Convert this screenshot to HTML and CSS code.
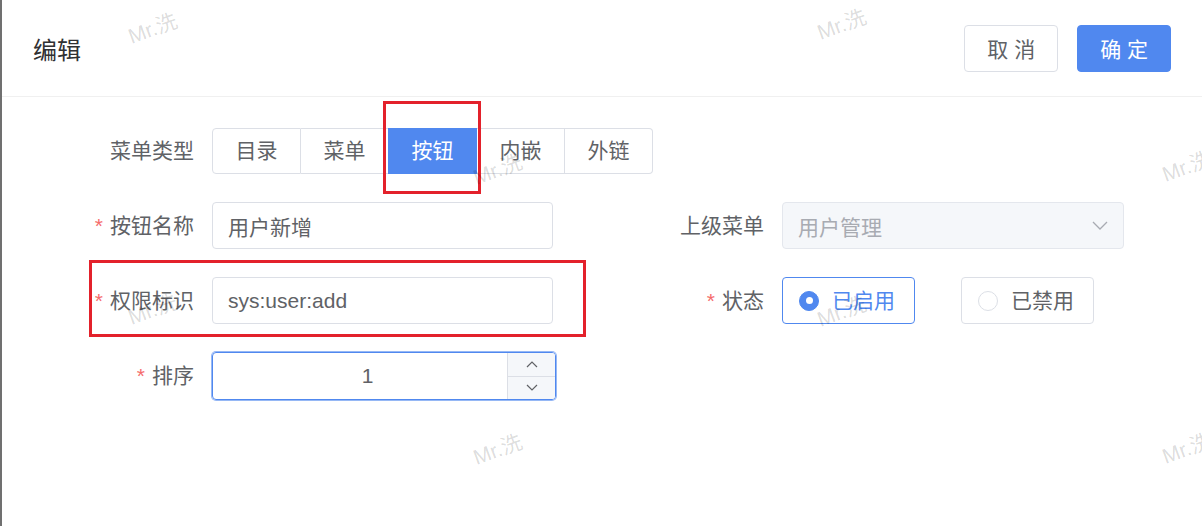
FILE: index.html
```html
<!DOCTYPE html>
<html lang="zh-CN">
<head>
  <meta charset="UTF-8">
  <title>编辑</title>
  <link rel="stylesheet" href="styles.css">
</head>
<body>
  <div class="page">
    <div class="dialog-header">
      <span class="dialog-title">编辑</span>
      <div class="dialog-actions">
        <button class="btn">取 消</button>
        <button class="btn btn-primary">确 定</button>
      </div>
    </div>

    <form class="form">
      <div class="form-item full">
        <label class="form-label">菜单类型</label>
        <div class="seg">
          <span class="seg-btn">目录</span>
          <span class="seg-btn">菜单</span>
          <span class="seg-btn active">按钮</span>
          <span class="seg-btn">内嵌</span>
          <span class="seg-btn">外链</span>
        </div>
      </div>

      <div class="form-item">
        <label class="form-label required">按钮名称</label>
        <input class="input" type="text" value="用户新增">
      </div>
      <div class="form-item">
        <label class="form-label">上级菜单</label>
        <div class="select">
          <span>用户管理</span>
          <svg width="16" height="9" viewBox="0 0 16 9"><polyline points="1,1 8,8 15,1" fill="none" stroke="#a8abb2" stroke-width="1.3"/></svg>
        </div>
      </div>

      <div class="form-item">
        <label class="form-label required">权限标识</label>
        <input class="input" type="text" value="sys:user:add">
      </div>
      <div class="form-item">
        <label class="form-label required">状态</label>
        <span class="radio checked"><span class="radio-dot"></span>已启用</span>
        <span class="radio"><span class="radio-dot"></span>已禁用</span>
      </div>

      <div class="form-item">
        <label class="form-label required">排序</label>
        <div class="number">
          <span class="number-value">1</span>
          <div class="number-ctrl">
            <span class="number-step">
              <svg width="12" height="7" viewBox="0 0 12 7"><polyline points="1,6 6,1 11,6" fill="none" stroke="#606266" stroke-width="1.2"/></svg>
            </span>
            <span class="number-step">
              <svg width="12" height="7" viewBox="0 0 12 7"><polyline points="1,1 6,6 11,1" fill="none" stroke="#606266" stroke-width="1.2"/></svg>
            </span>
          </div>
        </div>
      </div>
    </form>

    <div class="marks">
      <span class="mark mark-type"></span>
      <span class="mark mark-perm"></span>
    </div>

    <div class="watermarks">
      <span class="wm wm-1">Mr.洗</span>
      <span class="wm wm-2">Mr.洗</span>
      <span class="wm wm-3">Mr.洗</span>
      <span class="wm wm-4">Mr.洗</span>
      <span class="wm wm-5">Mr.洗</span>
      <span class="wm wm-6">Mr.洗</span>
      <span class="wm wm-7">Mr.洗</span>
      <span class="wm wm-8">Mr.洗</span>
    </div>
  </div>
</body>
</html>
```

FILE: styles.css
```css
* {
  box-sizing: border-box;
}

body {
  margin: 0;
  font-family: "Liberation Sans", "Noto Sans CJK SC", sans-serif;
  background-color: #fff;
  color: #606266;
}

.page {
  position: relative;
  width: 1202px;
  height: 526px;
  overflow: hidden;
  border-left: 2px solid #707070;
}

/* header */
.dialog-header {
  height: 97px;
  display: flex;
  align-items: center;
  justify-content: space-between;
  padding: 0 31px;
  border-bottom: 1px solid #f0f0f0;
}

.dialog-title {
  font-size: 24px;
  color: #303133;
}

.dialog-actions {
  display: flex;
  gap: 19px;
}

.btn {
  height: 47px;
  padding: 0 22px;
  font-family: inherit;
  font-size: 21px;
  color: #606266;
  background-color: #fff;
  border: 1px solid #dcdfe6;
  border-radius: 4px;
  cursor: pointer;
}

.btn-primary {
  color: #fff;
  background-color: #5088ef;
  border-color: #5088ef;
}

/* form */
.form {
  display: grid;
  grid-template-columns: 479px 480px;
  column-gap: 91px;
  row-gap: 28px;
  padding: 31px 0 0 72px;
}

.form-item {
  display: flex;
  align-items: center;
}

.form-item.full {
  grid-column: 1 / -1;
}

.form-label {
  flex: none;
  width: 138px;
  padding-right: 18px;
  text-align: right;
  font-size: 21px;
  line-height: 46px;
  color: #606266;
}

.required::before {
  content: "*";
  color: #f56c6c;
  margin-right: 7px;
}

.input {
  flex: none;
  width: 341px;
  height: 47px;
  padding: 0 15px;
  font-family: inherit;
  font-size: 21px;
  color: #606266;
  border: 1px solid #dcdfe6;
  border-radius: 4px;
  outline: none;
}

/* segmented radio */
.seg {
  display: flex;
}

.seg-btn {
  height: 46px;
  line-height: 44px;
  padding: 0 22.5px;
  font-size: 21px;
  color: #606266;
  background-color: #fff;
  border: 1px solid #dcdfe6;
  border-left: 0;
}

.seg-btn:first-child {
  border-left: 1px solid #dcdfe6;
  border-radius: 4px 0 0 4px;
}

.seg-btn:last-child {
  border-radius: 0 4px 4px 0;
}

.seg-btn.active {
  color: #fff;
  background-color: #5088ef;
  border-color: #5088ef;
  box-shadow: -1px 0 0 0 #5088ef;
}

/* select */
.select {
  flex: none;
  width: 342px;
  height: 47px;
  display: flex;
  align-items: center;
  justify-content: space-between;
  padding: 0 15px;
  font-size: 21px;
  color: #a8abb2;
  background-color: #f5f7fa;
  border: 1px solid #e4e7ed;
  border-radius: 4px;
}

/* bordered radios */
.radio {
  height: 47px;
  display: flex;
  align-items: center;
  gap: 13px;
  padding: 0 19px 0 16px;
  font-size: 21px;
  line-height: 1;
  color: #606266;
  border: 1px solid #dcdfe6;
  border-radius: 4px;
}

.radio + .radio {
  margin-left: 46px;
}

.radio-dot {
  position: relative;
  width: 20px;
  height: 20px;
  border-radius: 50%;
  border: 1px solid #dcdfe6;
  background-color: #fff;
}

.radio.checked {
  color: #5088ef;
  border-color: #5088ef;
}

.radio.checked .radio-dot {
  background-color: #5088ef;
  border-color: #5088ef;
}

.radio.checked .radio-dot::after {
  content: "";
  position: absolute;
  left: 50%;
  top: 50%;
  width: 7px;
  height: 7px;
  margin: -3.5px 0 0 -3.5px;
  border-radius: 50%;
  background-color: #fff;
}

/* number input */
.number {
  flex: none;
  width: 344px;
  height: 48px;
  display: flex;
  border: 1px solid #5088ef;
  border-radius: 4px;
  box-shadow: 0 0 0 1px rgba(80, 136, 239, 0.6);
}

.number-value {
  flex: 1;
  padding-left: 15px;
  text-align: center;
  font-size: 21px;
  line-height: 46px;
  color: #606266;
}

.number-ctrl {
  width: 48px;
  display: flex;
  flex-direction: column;
  background-color: #f5f7fa;
  border-left: 1px solid #dcdfe6;
  border-radius: 0 3px 3px 0;
}

.number-step {
  flex: 1;
  display: flex;
  align-items: center;
  justify-content: center;
}

.number-step:first-child {
  border-bottom: 1px solid #dcdfe6;
}

/* red annotation boxes */
.mark {
  position: absolute;
  border: 3px solid #e3212b;
}

.mark-type {
  left: 381px;
  top: 101px;
  width: 98px;
  height: 93px;
}

.mark-perm {
  left: 87px;
  top: 260px;
  width: 497px;
  height: 77px;
}

/* watermark */
.watermarks {
  position: absolute;
  inset: 0;
  pointer-events: none;
}

.wm {
  position: absolute;
  transform: translate(-50%, -50%) rotate(-20deg);
  font-size: 21px;
  color: rgba(0, 0, 0, 0.15);
  white-space: nowrap;
}

.wm-1 { left: 150px; top: 27px; }
.wm-2 { left: 839px; top: 23px; }
.wm-3 { left: 495px; top: 168px; }
.wm-4 { left: 1184px; top: 165px; }
.wm-5 { left: 150px; top: 308px; }
.wm-6 { left: 839px; top: 310px; }
.wm-7 { left: 495px; top: 448px; }
.wm-8 { left: 1184px; top: 447px; }
```
